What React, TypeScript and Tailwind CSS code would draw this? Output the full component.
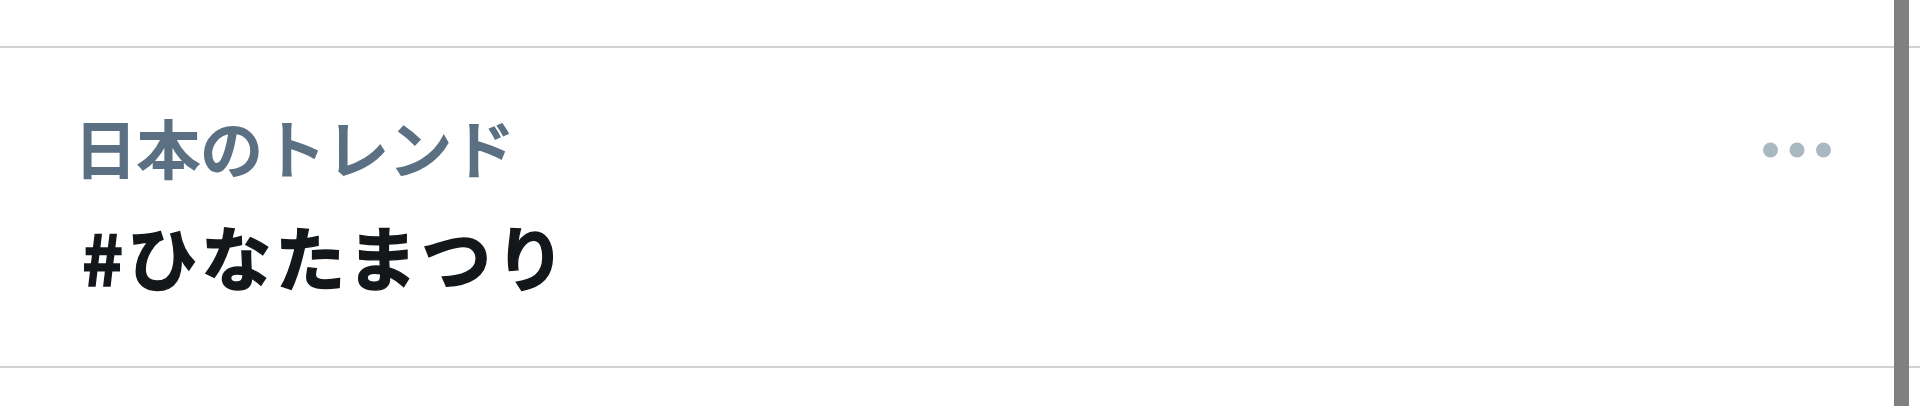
import React from "react";

const TrendDots = () => (
  <svg width="68" height="16" viewBox="0 0 68 16" fill="#aab8c2">
    <circle cx="7.5" cy="8" r="7.5" />
    <circle cx="34" cy="8" r="7.5" />
    <circle cx="60.5" cy="8" r="7.5" />
  </svg>
);

const App = () => {
  return (
    <div className="relative h-[406px] w-full overflow-hidden bg-white font-['Noto_Sans_CJK_JP','Noto_Sans',sans-serif]">
      <div className="h-[46px]" />
      <div className="h-[2px] bg-[#d2d2d2]" />

      <div className="flex h-[318px] items-start justify-between pl-[74px] pr-[89px]">
        <div className="flex flex-col pt-[66px]">
          <span className="text-[63px] font-medium leading-[63px] text-[#5b7083] [-webkit-text-stroke:1.8px_#5b7083]">
            日本のトレンド
          </span>
          <span className="ml-[8px] mt-[44px] text-[70px] font-bold leading-[70px] tracking-[4px] text-[#14171a] [-webkit-text-stroke:1.4px_#14171a]">
            #ひなたまつり
          </span>
        </div>
        <button className="mt-[94px]">
          <TrendDots />
        </button>
      </div>

      <div className="h-[2px] bg-[#d2d2d2]" />

      {/* scrollbar thumb */}
      <div className="absolute right-[11px] top-0 h-full w-[15px] bg-[#808080]" />
    </div>
  );
};

export default App;
